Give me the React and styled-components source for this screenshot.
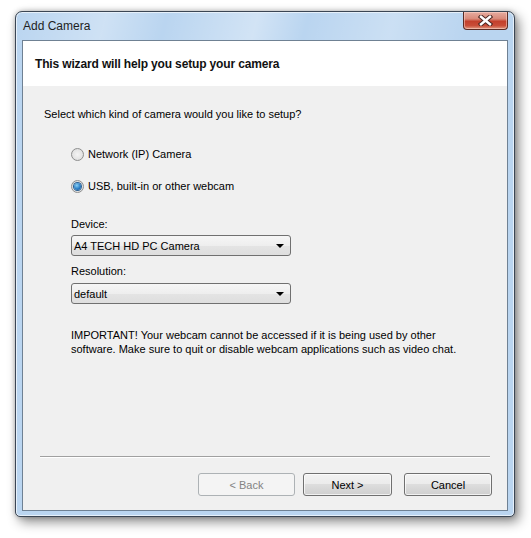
import React from 'react'
import styled, { createGlobalStyle } from 'styled-components'

const GlobalStyle = createGlobalStyle`
  html, body {
    margin: 0;
    padding: 0;
    background: #ffffff;
  }
  body {
    font-family: "Liberation Sans", Arial, sans-serif;
    font-size: 11px;
    color: #000;
  }
`

const Page = styled.div`
  width: 531px;
  height: 538px;
  padding: 11px 0 0 15px;
  box-sizing: border-box;
`

const Window = styled.div`
  width: 500px;
  height: 506px;
  box-sizing: border-box;
  border: 1px solid #3b4654;
  border-radius: 7px 7px 5px 5px;
  padding: 0 6px 5px 6px;
  display: flex;
  flex-direction: column;
  background:
    linear-gradient(104deg,
      rgba(255,255,255,0) 0%,
      rgba(255,255,255,0.3) 18%,
      rgba(255,255,255,0) 30%,
      rgba(255,255,255,0.35) 48%,
      rgba(255,255,255,0) 58%,
      rgba(255,255,255,0.25) 75%,
      rgba(255,255,255,0) 90%) 0 0 / 100% 30px no-repeat,
    #bad5f0;
  box-shadow: inset 0 0 0 1px #e6f0fa, 4px 5px 12px rgba(0,0,0,0.45), 0 0 5px rgba(0,0,0,0.25);
`

const TitleBar = styled.div`
  height: 28px;
  display: flex;
  justify-content: space-between;
  align-items: flex-start;
  flex: none;
`

const Title = styled.span`
  margin: 7px 0 0 1px;
  font-size: 12px;
  color: #1e1e1e;
`

const CloseButton = styled.div`
  width: 45px;
  height: 18px;
  box-sizing: border-box;
  border: 1px solid #5a2b24;
  border-top: none;
  border-radius: 0 0 4px 4px;
  background: linear-gradient(#e6aca0 0%, #d98a7a 40%, #c3402c 55%, #c94d38 80%, #e09a82 100%);
  box-shadow: inset 0 0 0 1px rgba(255,220,210,0.5);
  display: flex;
  align-items: center;
  justify-content: center;
`

const Client = styled.div`
  flex: 1;
  border: 1px solid #6f8193;
  background: #f0f0f0;
  display: flex;
  flex-direction: column;
`

const Header = styled.div`
  height: 45px;
  background: #ffffff;
  display: flex;
  align-items: center;
  padding-left: 12px;
  font-weight: bold;
  font-size: 12px;
  letter-spacing: -0.15px;
  color: #111;
`

const Body = styled.div`
  flex: 1;
  padding: 21px 0 0 21px;
  display: flex;
  flex-direction: column;
`

const Prompt = styled.div`
  line-height: 15px;
`

const Indent = styled.div`
  padding-left: 27px;
  display: flex;
  flex-direction: column;
`

const RadioRow = styled.label`
  display: flex;
  align-items: center;
  gap: 4px;
  height: 15px;
  line-height: 15px;
  margin-top: ${p => p.$top}px;
`

const RadioDot = styled.span`
  width: 13px;
  height: 13px;
  box-sizing: border-box;
  border-radius: 50%;
  border: 1px solid #8e8f8f;
  background: radial-gradient(circle at 50% 50%, #f4f4f4 0%, #e4e4e4 60%, #d6d6d6 100%);
  display: flex;
  align-items: center;
  justify-content: center;
  &::after {
    content: '';
    width: 7px;
    height: 7px;
    border-radius: 50%;
    display: ${p => (p.$checked ? 'block' : 'none')};
    background: radial-gradient(circle at 40% 35%, #8ad0f5 0%, #2b7fc6 55%, #0f4d8c 100%);
    box-shadow: 0 0 0 1px #2a5f91;
  }
`

const FieldLabel = styled.div`
  line-height: 15px;
  margin-top: ${p => p.$top}px;
`

const Select = styled.div`
  width: 220px;
  height: 21px;
  box-sizing: border-box;
  margin-top: ${p => p.$top}px;
  border: 1px solid #707070;
  border-radius: 3px;
  background: linear-gradient(#f6f6f6 0%, #eeeeee 50%, #e4e4e4 50%, #dedede 100%);
  display: flex;
  align-items: center;
  justify-content: space-between;
  padding: 0 6px 0 2px;
`

const Arrow = styled.span`
  width: 0;
  height: 0;
  border-left: 4px solid transparent;
  border-right: 4px solid transparent;
  border-top: 4px solid #000;
`

const Notice = styled.div`
  margin-top: 24px;
  line-height: 14px;
  width: 400px;
`

const Footer = styled.div`
  flex: none;
  padding: 0 15px 14px 17px;
  display: flex;
  flex-direction: column;
`

const Separator = styled.div`
  height: 0;
  margin-right: 2px;
  border-top: 1px solid #a0a0a0;
  border-bottom: 1px solid #ffffff;
`

const ButtonRow = styled.div`
  display: flex;
  justify-content: flex-end;
  margin-top: 15px;
`

const Button = styled.button`
  width: ${p => p.$w}px;
  height: 23px;
  margin-left: ${p => p.$gap}px;
  box-sizing: border-box;
  border: 1px solid ${p => (p.disabled ? '#adb2b5' : '#707070')};
  border-radius: 3px;
  background: ${p => (p.disabled
    ? '#f4f4f4'
    : 'linear-gradient(#f2f2f2 0%, #ebebeb 50%, #dddddd 50%, #cfcfcf 100%)')};
  box-shadow: inset 0 0 0 1px ${p => (p.disabled ? 'transparent' : 'rgba(255,255,255,0.7)')};
  font-family: "Liberation Sans", Arial, sans-serif;
  font-size: 11px;
  color: ${p => (p.disabled ? '#838383' : '#000')};
  padding: 0;
`

function CloseGlyph() {
  return (
    <svg width="15" height="11" viewBox="0 0 15 11">
      <path d="M3 1.8 L12 9.2 M12 1.8 L3 9.2" stroke="#4a2620" strokeWidth="4.4" strokeLinecap="square" />
      <path d="M3 1.8 L12 9.2 M12 1.8 L3 9.2" stroke="#ffffff" strokeWidth="2.4" strokeLinecap="square" />
    </svg>
  )
}

export default function App() {
  return (
    <Page>
      <GlobalStyle />
      <Window>
        <TitleBar>
          <Title>Add Camera</Title>
          <CloseButton><CloseGlyph /></CloseButton>
        </TitleBar>
        <Client>
          <Header>This wizard will help you setup your camera</Header>
          <Body>
            <Prompt>Select which kind of camera would you like to setup?</Prompt>
            <Indent>
              <RadioRow $top={25}><RadioDot />Network (IP) Camera</RadioRow>
              <RadioRow $top={17}><RadioDot $checked />USB, built-in or other webcam</RadioRow>
              <FieldLabel $top={23}>Device:</FieldLabel>
              <Select $top={3}>A4 TECH HD PC Camera<Arrow /></Select>
              <FieldLabel $top={8}>Resolution:</FieldLabel>
              <Select $top={4}>default<Arrow /></Select>
              <Notice>
                IMPORTANT! Your webcam cannot be accessed if it is being used by other
                software. Make sure to quit or disable webcam applications such as video chat.
              </Notice>
            </Indent>
          </Body>
          <Footer>
            <Separator />
            <ButtonRow>
              <Button $w={97} $gap={0} disabled>&lt; Back</Button>
              <Button $w={89} $gap={8}>Next &gt;</Button>
              <Button $w={88} $gap={12}>Cancel</Button>
            </ButtonRow>
          </Footer>
        </Client>
      </Window>
    </Page>
  )
}
